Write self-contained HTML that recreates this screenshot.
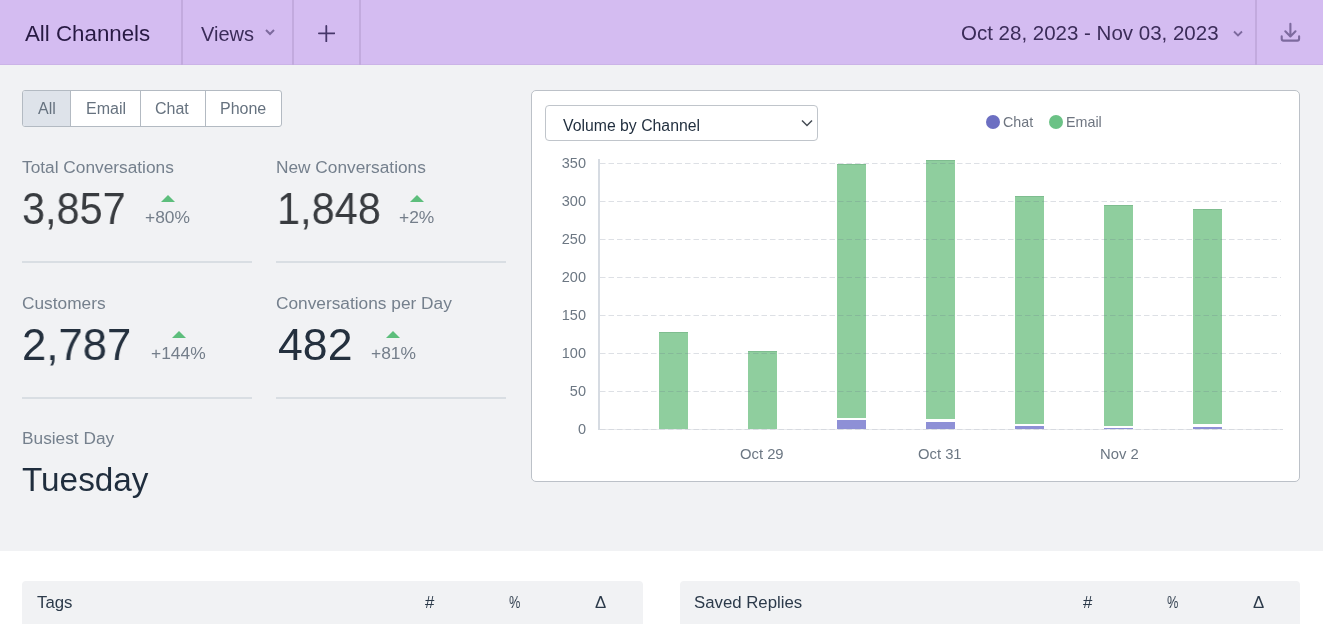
<!DOCTYPE html>
<html><head><meta charset="utf-8">
<style>
*{margin:0;padding:0;box-sizing:border-box}
html,body{width:1323px;height:638px;overflow:hidden;background:#fff;font-family:"Liberation Sans",sans-serif}
.a{position:absolute;line-height:1;white-space:nowrap;will-change:transform}
#hdr{position:absolute;left:0;top:0;width:1323px;height:65px;background:#d4bcf1}
.vd{position:absolute;top:0;width:2px;height:65px;background:#c2aade}
#gray{position:absolute;left:0;top:65px;width:1323px;height:486px;background:#f1f2f4}
.hd{color:#3b2c59}
#bg{position:absolute;left:22px;top:90px;width:260px;height:37px;border:1px solid #b3bac2;border-radius:3px;background:#fff;overflow:hidden}
.seg{position:absolute;top:0;height:35px;border-left:1px solid #b3bac2}
.bt{color:#66727f;font-size:16px}
.lbl{color:#75808d;font-size:17.3px}
.num{font-size:44px;transform-origin:0 0}
.pct{color:#747e8a;font-size:17.4px}
.tri{position:absolute;width:0;height:0;border-left:7px solid transparent;border-right:7px solid transparent;border-bottom:7px solid #5dbe7c}
.sep{position:absolute;height:2px;background:#d9dee3}
#card{position:absolute;left:531px;top:90px;width:769px;height:392px;border:1px solid #bcc1c8;border-radius:5px;background:#fff}
#sel{position:absolute;left:545px;top:105px;width:273px;height:36px;border:1px solid #c0c5cb;border-radius:4px;background:#fff}
.yl{color:#6c7783;font-size:14.5px;text-align:right;width:40px}
.xl{color:#6c7783;font-size:14.8px}
.bar{position:absolute;width:29px}
.g{background:#8fce9e;box-shadow:inset 0 1px 0 rgba(70,130,90,.22)}
.p{background:#8e90d6}
.th{position:absolute;top:581px;height:43px;background:#f1f2f4;border-radius:4px 4px 0 0}
.tt{color:#2c3a4a;font-size:16.8px}
</style></head><body>
<div id="hdr"></div><div style="position:absolute;left:0;top:64px;width:1323px;height:1px;background:#cbb3e7"></div>
<div class="vd" style="left:181px"></div>
<div class="vd" style="left:292px"></div>
<div class="vd" style="left:359px"></div>
<div class="vd" style="left:1255px"></div>
<div id="t_title" class="a hd" style="color:#281a43;left:25px;top:23.2px;font-size:22.3px">All Channels</div>
<div id="t_views" class="a hd" style="left:201px;top:23.6px;font-size:20px">Views</div>
<svg class="a" style="left:264px;top:27px" width="12" height="10" viewBox="0 0 12 10"><path d="M2 3 L6 7 L10 3" fill="none" stroke="#7d6a9e" stroke-width="2"/></svg>
<svg class="a" style="left:317px;top:24px" width="18" height="18" viewBox="0 0 18 18"><path d="M9.3 1.9 V17.4 M1.9 9.3 H17.4" fill="none" stroke="#46376a" stroke-width="1.8" stroke-linecap="round"/></svg>
<div id="t_date" class="a hd" style="left:961px;top:23px;font-size:20.5px">Oct 28, 2023 - Nov 03, 2023</div>
<svg class="a" style="left:1232px;top:29px" width="12" height="10" viewBox="0 0 12 10"><path d="M2 2.5 L6 6.5 L10 2.5" fill="none" stroke="#7d6a9e" stroke-width="1.8"/></svg>
<svg class="a" style="left:1279px;top:22px" width="23" height="22" viewBox="0 0 23 22"><path d="M11.4 1.8 V14.2 M6.3 9.3 L11.4 14.4 L16.5 9.3 M2.7 14.3 V16.8 Q2.7 18.6 4.5 18.6 H18.3 Q20.1 18.6 20.1 16.8 V14.3" fill="none" stroke="#7d6a9e" stroke-width="2.1" stroke-linecap="round" stroke-linejoin="round"/></svg>

<div id="gray"></div>
<div id="bg">
  <div style="position:absolute;left:0;top:0;width:47px;height:35px;background:#dee3ea"></div>
  <div class="seg" style="left:47px"></div>
  <div class="seg" style="left:117px"></div>
  <div class="seg" style="left:182px"></div>
</div>
<div id="b_all" class="a bt" style="left:38px;top:101.2px">All</div>
<div id="b_email" class="a bt" style="left:86px;top:101.2px">Email</div>
<div id="b_chat" class="a bt" style="left:155px;top:101.2px">Chat</div>
<div id="b_phone" class="a bt" style="left:220px;top:101.2px">Phone</div>

<div id="l1" class="a lbl" style="left:22px;top:159.4px">Total Conversations</div>
<div id="n1" class="a num" style="left:22px;top:186.8px;color:#383b3f;transform:scaleX(0.94)">3,857</div>
<div class="tri" style="left:161px;top:195px"></div>
<div id="p1" class="a pct" style="left:145px;top:208.6px">+80%</div>
<div class="sep" style="left:22px;top:261px;width:230px"></div>

<div id="l2" class="a lbl" style="left:276px;top:159.4px">New Conversations</div>
<div id="n2" class="a num" style="left:277px;top:186.8px;color:#383b3f;transform:scaleX(0.942)">1,848</div>
<div class="tri" style="left:410px;top:195px"></div>
<div id="p2" class="a pct" style="left:399px;top:208.6px">+2%</div>
<div class="sep" style="left:276px;top:261px;width:230px"></div>

<div id="l3" class="a lbl" style="left:22px;top:295.4px">Customers</div>
<div id="n3" class="a num" style="left:22px;top:322.8px;color:#24303e;transform:scaleX(0.991)">2,787</div>
<div class="tri" style="left:172px;top:331px"></div>
<div id="p3" class="a pct" style="left:151px;top:345.2px">+144%</div>
<div class="sep" style="left:22px;top:397px;width:230px"></div>

<div id="l4" class="a lbl" style="left:276px;top:295.4px">Conversations per Day</div>
<div id="n4" class="a num" style="left:277.5px;top:322.8px;color:#24303e;transform:scaleX(1.014)">482</div>
<div class="tri" style="left:386px;top:331px"></div>
<div id="p4" class="a pct" style="left:371px;top:345.2px">+81%</div>
<div class="sep" style="left:276px;top:397px;width:230px"></div>

<div id="l5" class="a lbl" style="left:22px;top:430.4px">Busiest Day</div>
<div id="n5" class="a" style="left:22px;top:463.1px;font-size:33.3px;color:#1f2d3d">Tuesday</div>

<!-- chart card -->
<div id="card"></div>
<div id="sel"></div>
<div id="t_sel" class="a" style="left:563px;top:117.7px;font-size:15.8px;color:#1f2d3d">Volume by Channel</div>
<svg class="a" style="left:800px;top:117px" width="14" height="12" viewBox="0 0 14 12"><path d="M2 3.5 L7 8.5 L12 3.5" fill="none" stroke="#454b54" stroke-width="1.5"/></svg>

<div style="position:absolute;left:986px;top:115px;width:14px;height:14px;border-radius:50%;background:#6c6fc2"></div>
<div id="lg_chat" class="a" style="left:1003px;top:114.8px;font-size:14.3px;color:#6e7580">Chat</div>
<div style="position:absolute;left:1049px;top:115px;width:14px;height:14px;border-radius:50%;background:#6bc286"></div>
<div id="lg_email" class="a" style="left:1066px;top:114.8px;font-size:14.3px;color:#6e7580">Email</div>

<div style="position:absolute;left:598px;top:159px;width:2px;height:271px;background:#d6dbe2"></div>

<div class="a yl" style="left:546px;top:156.2px">350</div>
<div class="a yl" style="left:546px;top:194.2px">300</div>
<div class="a yl" style="left:546px;top:232.2px">250</div>
<div class="a yl" style="left:546px;top:270.2px">200</div>
<div class="a yl" style="left:546px;top:308.2px">150</div>
<div class="a yl" style="left:546px;top:346.2px">100</div>
<div class="a yl" style="left:546px;top:384.2px">50</div>
<div class="a yl" style="left:546px;top:422.2px">0</div>

<div class="bar g" style="left:659px;top:332px;height:97px"></div>
<div class="bar g" style="left:748px;top:351px;height:78px"></div>
<div class="bar g" style="left:837px;top:164px;height:253.5px"></div>
<div class="bar p" style="left:837px;top:420px;height:9px"></div>
<div class="bar g" style="left:926px;top:160px;height:259px"></div>
<div class="bar p" style="left:926px;top:422px;height:7px"></div>
<div class="bar g" style="left:1015px;top:196px;height:228px"></div>
<div class="bar p" style="left:1015px;top:426px;height:3px"></div>
<div class="bar g" style="left:1104px;top:205px;height:221px"></div>
<div class="bar p" style="left:1104px;top:428px;height:1px"></div>
<div class="bar g" style="left:1193px;top:209px;height:215px"></div>
<div class="bar p" style="left:1193px;top:427px;height:2px"></div>

<svg class="a" style="left:0;top:0" width="1323" height="638"><g stroke="rgba(100,115,135,0.22)" stroke-width="1" stroke-dasharray="5.5 3"><line x1="600" y1="163.5" x2="1281" y2="163.5"/><line x1="600" y1="201.5" x2="1281" y2="201.5"/><line x1="600" y1="239.5" x2="1281" y2="239.5"/><line x1="600" y1="277.5" x2="1281" y2="277.5"/><line x1="600" y1="315.5" x2="1281" y2="315.5"/><line x1="600" y1="353.5" x2="1281" y2="353.5"/><line x1="600" y1="391.5" x2="1281" y2="391.5"/></g><line x1="600" y1="429.5" x2="1283" y2="429.5" stroke="rgba(100,115,135,0.14)" stroke-width="1"/><line x1="600" y1="429.5" x2="1283" y2="429.5" stroke="rgba(100,115,135,0.14)" stroke-width="1" stroke-dasharray="5.5 3"/></svg>
<div id="x1" class="a xl" style="left:740px;top:446.9px">Oct 29</div>
<div id="x2" class="a xl" style="left:918px;top:446.9px">Oct 31</div>
<div id="x3" class="a xl" style="left:1100px;top:446.9px">Nov 2</div>

<!-- tables -->
<div class="th" style="left:22px;width:621px"></div>
<div id="tg" class="a tt" style="left:37px;top:594.5px">Tags</div>
<div class="a tt" style="left:425px;top:594.5px">#</div>
<div class="a tt" style="left:509px;top:594.5px;transform:scaleX(0.76);transform-origin:0 0">%</div>
<div class="a tt" style="left:595px;top:594.5px">&#916;</div>
<div class="th" style="left:680px;width:620px"></div>
<div id="sr" class="a tt" style="left:694px;top:594.5px">Saved Replies</div>
<div class="a tt" style="left:1082.5px;top:594.5px">#</div>
<div class="a tt" style="left:1167px;top:594.5px;transform:scaleX(0.76);transform-origin:0 0">%</div>
<div class="a tt" style="left:1253px;top:594.5px">&#916;</div>
</body></html>
